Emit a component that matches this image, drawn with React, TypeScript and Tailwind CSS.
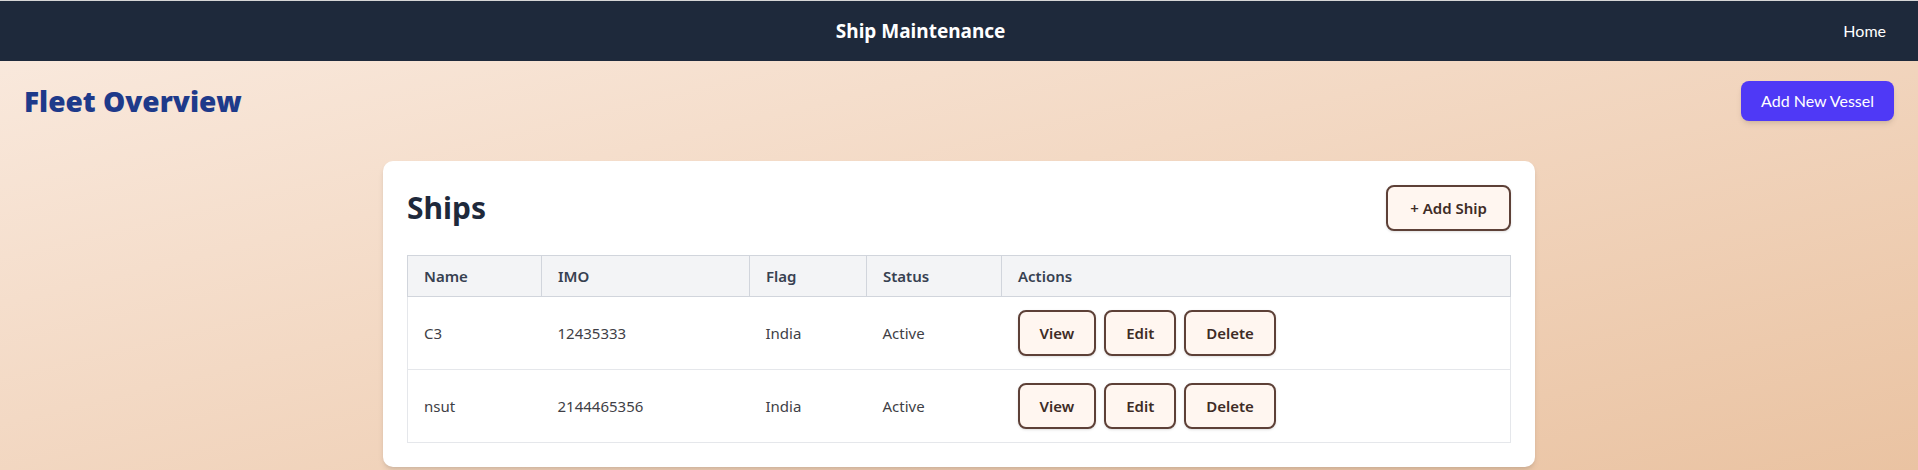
import React from "react";

const ships = [
  { name: "C3", imo: "12435333", flag: "India", status: "Active" },
  { name: "nsut", imo: "2144465356", flag: "India", status: "Active" },
];

function ActionButton({ label }: { label: string }) {
  return (
    <button className="rounded-lg border-2 border-[#5d4037] bg-[#fff6f0] px-5 py-[9px] text-[15px] leading-6 font-semibold text-[#3e2c26] shadow-sm">
      {label}
    </button>
  );
}

export default function App() {
  return (
    <div className="min-h-screen bg-linear-to-br from-[#faebe0] to-[#eac3a2] font-['Noto_Sans',sans-serif]">
      <nav className="flex h-[61px] items-center border-t border-[#d6d6d6] bg-[#1e293b] px-8">
        <div className="flex-1 pr-[34px] text-center">
          <span className="text-[19px] font-bold text-white">Ship Maintenance</span>
        </div>
        <a className="font-['Lato',sans-serif] text-base text-white">Home</a>
      </nav>

      <div className="flex items-center justify-between px-6 pt-5">
        <h1 className="font-['Open_Sans',sans-serif] text-[28px] leading-10 font-extrabold text-[#1e3a8a]">
          Fleet Overview
        </h1>
        <button className="h-10 rounded-lg bg-indigo-600 px-5 font-['Lato',sans-serif] text-base text-white shadow-md">
          Add New Vessel
        </button>
      </div>

      <div className="mx-auto mt-10 max-w-6xl rounded-[10px] bg-white p-6 shadow-md">
        <div className="mb-6 flex items-center justify-between">
          <h2 className="text-[30px] leading-9 font-bold text-[#1e293b]">Ships</h2>
          <button className="rounded-lg border-2 border-[#5d4037] bg-[#fff6f0] px-[22px] py-[9px] text-[15px] leading-6 font-semibold text-[#3e2c26] shadow-sm">
            + Add Ship
          </button>
        </div>

        <table className="w-full table-fixed border-collapse border border-gray-200 text-left">
          <thead>
            <tr className="bg-gray-100">
              <th className="w-[134px] border border-gray-300 px-4 py-2 text-[15px] leading-6 font-semibold text-[#374151]">Name</th>
              <th className="w-[208px] border border-gray-300 px-4 py-2 text-[15px] leading-6 font-semibold text-[#374151]">IMO</th>
              <th className="w-[117px] border border-gray-300 px-4 py-2 text-[15px] leading-6 font-semibold text-[#374151]">Flag</th>
              <th className="w-[135px] border border-gray-300 px-4 py-2 text-[15px] leading-6 font-semibold text-[#374151]">Status</th>
              <th className="border border-gray-300 px-4 py-2 text-[15px] leading-6 font-semibold text-[#374151]">Actions</th>
            </tr>
          </thead>
          <tbody>
            {ships.map((s) => (
              <tr key={s.imo} className="border-b border-gray-200">
                <td className="px-4 py-[13px] text-[15px] text-[#3f3f46]">{s.name}</td>
                <td className="px-4 py-[13px] text-[15px] text-[#3f3f46]">{s.imo}</td>
                <td className="px-4 py-[13px] text-[15px] text-[#3f3f46]">{s.flag}</td>
                <td className="px-4 py-[13px] text-[15px] text-[#3f3f46]">{s.status}</td>
                <td className="px-4 py-[13px]">
                  <div className="flex gap-2">
                    <ActionButton label="View" />
                    <ActionButton label="Edit" />
                    <ActionButton label="Delete" />
                  </div>
                </td>
              </tr>
            ))}
          </tbody>
        </table>
      </div>
    </div>
  );
}
